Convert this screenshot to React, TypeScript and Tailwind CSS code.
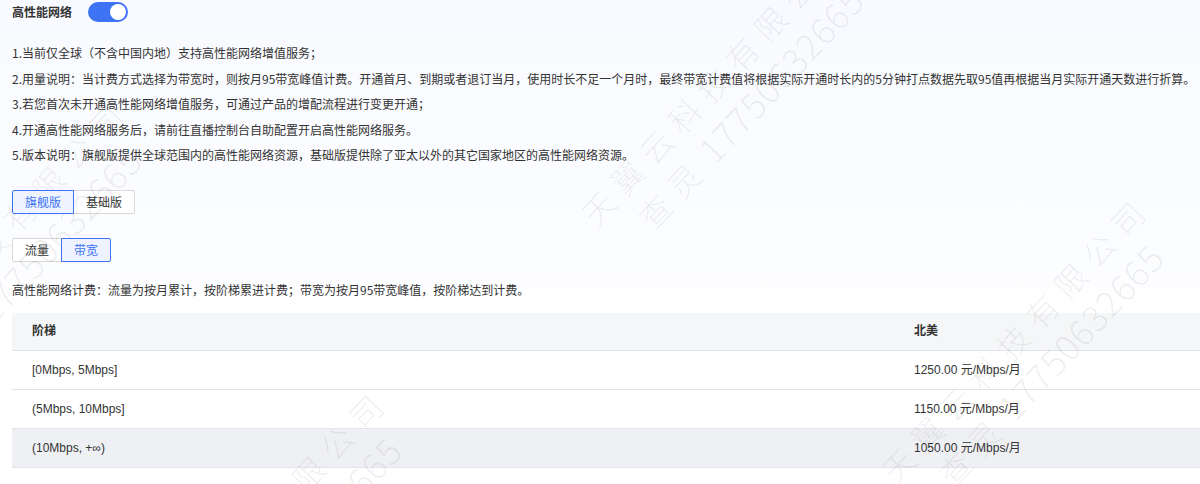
import React from "react";

const notes = [
	"1.当前仅全球（不含中国内地）支持高性能网络增值服务；",
	"2.用量说明：当计费方式选择为带宽时，则按月95带宽峰值计费。开通首月、到期或者退订当月，使用时长不足一个月时，最终带宽计费值将根据实际开通时长内的5分钟打点数据先取95值再根据当月实际开通天数进行折算。",
	"3.若您首次未开通高性能网络增值服务，可通过产品的增配流程进行变更开通；",
	"4.开通高性能网络服务后，请前往直播控制台自助配置开启高性能网络服务。",
	"5.版本说明：旗舰版提供全球范围内的高性能网络资源，基础版提供除了亚太以外的其它国家地区的高性能网络资源。",
];

const rows = [
	{ range: "[0Mbps, 5Mbps]", price: "1250.00 元/Mbps/月" },
	{ range: "(5Mbps, 10Mbps]", price: "1150.00 元/Mbps/月" },
	{ range: "(10Mbps, +∞)", price: "1050.00 元/Mbps/月", hover: true },
];

const Segment = ({ items, active }: { items: string[]; active: number }) => (
	<div className="flex">
		{items.map((label, i) => (
			<button
				key={label}
				className={
					"h-6 px-3 text-[12px] leading-[22px] border " +
					(i === 0 ? "rounded-l-[2px] " : "-ml-px rounded-r-[2px] ") +
					(i === active
						? "relative z-10 border-[#3d73f5] bg-[#eef3ff] text-[#3d73f5]"
						: "border-[#d9d9d9] bg-white text-[#333]")
				}
			>
				{label}
			</button>
		))}
	</div>
);

// faint diagonal watermark tile
const Mark = ({ className }: { className: string }) => (
	<div
		className={
			"pointer-events-none absolute origin-top-left -rotate-[47deg] whitespace-nowrap font-light text-black/[0.07] " +
			className
		}
	>
		<div className="text-[32px] leading-[40px] tracking-[10px]">天翼云科技有限公司</div>
		<div className="ml-[36px] mt-[2px] flex items-baseline leading-[40px]">
			<span className="text-[32px] tracking-[10px]">查灵</span>
			<span className="ml-[6px] text-[36px] tracking-[1px]">17750632665</span>
		</div>
	</div>
);

export default function App() {
	return (
		<div
			className="relative h-[484px] w-[1200px] overflow-hidden bg-[linear-gradient(180deg,#f9faff_0%,#fcfdff_55%,#ffffff_65%)] text-[12px] text-[#333]"
			style={{ fontFamily: '"Noto Sans CJK SC", "Liberation Sans", sans-serif' }}
		>
			<div className="pl-3">
				<div className="flex h-6 items-center">
					<span className="w-[76px] font-bold">高性能网络</span>
					<div className="flex h-5 w-10 items-center justify-end rounded-full bg-[#3d73f5] px-[2px]">
						<div className="h-4 w-4 rounded-full bg-white" />
					</div>
				</div>

				<div className="mt-4 leading-[25.5px]">
					{notes.map((n) => (
						<p key={n} className="whitespace-nowrap">
							{n}
						</p>
					))}
				</div>

				<div className="mt-[22px]">
					<Segment items={["旗舰版", "基础版"]} active={0} />
				</div>
				<div className="mt-6">
					<Segment items={["流量", "带宽"]} active={1} />
				</div>

				<p className="mt-[18px] leading-5">
					高性能网络计费：流量为按月累计，按阶梯累进计费；带宽为按月95带宽峰值，按阶梯达到计费。
				</p>

				<div
					className="mt-[13px] w-[1188px]"
					style={{ fontFamily: '"Liberation Sans", "Noto Sans CJK SC", sans-serif' }}
				>
					<div className="flex h-[38px] items-center border-b border-[#e2e3ee] bg-[#f5f6f8] font-bold">
						<div className="w-[882px] pl-5">阶梯</div>
						<div className="pl-5">北美</div>
					</div>
					{rows.map((r) => (
						<div
							key={r.range}
							className={
								"flex h-[39px] items-center border-b border-[#e2e3ee] " +
								(r.hover ? "bg-[#eff0f4]" : "bg-white")
							}
						>
							<div className="w-[882px] pl-5">{r.range}</div>
							<div className="pl-5">{r.price}</div>
						</div>
					))}
				</div>
			</div>

			<Mark className="left-[-150px] top-[365px]" />
			<Mark className="left-[110px] top-[655px]" />
			<Mark className="left-[572px] top-[205px]" />
			<Mark className="left-[872px] top-[462px]" />
		</div>
	);
}
